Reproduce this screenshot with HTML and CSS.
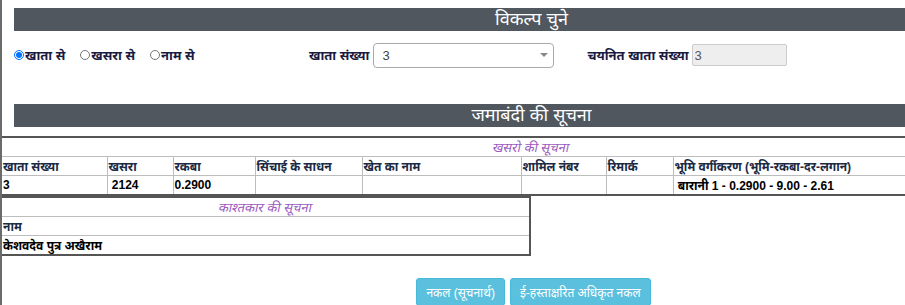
FILE: index.html
```
<!DOCTYPE html>
<html lang="hi">
<head>
<meta charset="utf-8">
<title>जमाबंदी</title>
<link rel="stylesheet" href="styles.css">
</head>
<body>
<div class="page">
  <div class="bar bar-top">विकल्प चुने</div>
  <div class="options">
    <div class="radios">
      <label class="radio"><input type="radio" name="opt" checked>खाता से</label>
      <label class="radio"><input type="radio" name="opt">खसरा से</label>
      <label class="radio"><input type="radio" name="opt">नाम से</label>
    </div>
    <label class="field-label">खाता संख्या</label>
    <span class="select-wrap"><select class="select"><option>3</option></select></span>
    <label class="field-label second">चयनित खाता संख्या</label>
    <input class="readonly" type="text" value="3" readonly>
  </div>
  <div class="bar bar-mid">जमाबंदी की सूचना</div>

  <table class="grid khasra">
    <colgroup>
      <col class="c1"><col class="c2"><col class="c3"><col class="c4"><col class="c5"><col class="c6"><col class="c7"><col>
    </colgroup>
    <tr><td class="title wide" colspan="8"><span class="slant">खसरो की सूचना</span></td></tr>
    <tr class="head">
      <td>खाता संख्या</td><td>खसरा</td><td>रकबा</td><td>सिंचाई के साधन</td><td>खेत का नाम</td><td>शामिल नंबर</td><td>रिमार्क</td><td>भूमि वर्गीकरण (भूमि-रकबा-दर-लगान)</td>
    </tr>
    <tr class="data">
      <td>3</td><td>&nbsp;2124</td><td>0.2900</td><td></td><td></td><td></td><td></td><td>&nbsp;बारानी 1 - 0.2900 - 9.00 - 2.61</td>
    </tr>
  </table>

  <table class="grid owner">
    <tr><td class="title"><span class="slant">काश्तकार की सूचना</span></td></tr>
    <tr class="head"><td>नाम</td></tr>
    <tr class="data"><td>केशवदेव पुत्र अखैराम</td></tr>
  </table>

  <div class="actions">
    <button class="btn" type="button">नकल (सूचनार्थ)</button>
    <button class="btn" type="button">ई-हस्ताक्षरित अधिकृत नकल</button>
  </div>
</div>
</body>
</html>
```
FILE: styles.css
```
html, body {
  margin: 0;
  padding: 0;
  background: #fff;
}
body {
  font-family: "Liberation Sans", "Noto Sans", Arial, sans-serif;
  color: #000;
}
.page {
  height: 305px;
  border-left: 2px solid #6b6b6b;
  overflow: hidden;
}
.bar {
  margin-left: 12px;
  height: 23px;
  line-height: 23px;
  background: #50575f;
  color: #fff;
  font-size: 18px;
  text-align: center;
  padding-left: 144px;
}
.bar-top {
  margin-top: 8px;
}
.options {
  display: flex;
  align-items: center;
  height: 24px;
  margin-top: 12px;
  padding-left: 12px;
}
.radios {
  display: flex;
  align-items: center;
  gap: 15px;
  width: 295px;
  font-size: 13px;
  font-weight: bold;
  color: #1a1a40;
}
.radio {
  display: flex;
  align-items: center;
}
.radio input {
  width: 10px;
  height: 10px;
  margin: 0 1px 0 0;
}
.field-label {
  font-size: 13px;
  font-weight: bold;
  color: #1a1a40;
  margin-right: 4px;
}
.field-label.second {
  margin-left: 33px;
  margin-right: 3px;
}
.select-wrap {
  position: relative;
  display: inline-block;
}
.select-wrap::after {
  content: "";
  position: absolute;
  right: 6px;
  top: 10px;
  border-left: 4px solid transparent;
  border-right: 4px solid transparent;
  border-top: 4px solid #888;
  pointer-events: none;
}
.select {
  appearance: none;
  -webkit-appearance: none;
  width: 181px;
  height: 25px;
  border: 1px solid #aaa;
  border-radius: 4px;
  background: #fff;
  font-family: "Liberation Sans", Arial, sans-serif;
  font-size: 13px;
  color: #444;
  padding: 0 8px;
  margin: 0;
}
.readonly {
  width: 95px;
  height: 22px;
  box-sizing: border-box;
  border: 1px solid #ccc;
  border-radius: 2px;
  background: #eee;
  color: #555;
  font-family: "Liberation Sans", Arial, sans-serif;
  font-size: 13px;
  padding: 0 2px;
  margin: 0;
}
.bar-mid {
  margin-top: 37px;
}
.grid {
  border-collapse: collapse;
  table-layout: fixed;
  font-size: 12px;
}
.grid td {
  padding: 0 0 0 1px;
  height: 18px;
  border: 1px solid #bdbdbd;
  white-space: nowrap;
  overflow: hidden;
  vertical-align: middle;
}
.khasra {
  width: 100%;
  margin-top: 9px;
  border-top: 2px solid #555;
  border-bottom: 2px solid #555;
}
.khasra td:last-child {
  border-right: none;
}
.khasra td:first-child, .owner td:first-child {
  border-left: none;
}
.c1 { width: 105px; }
.c2 { width: 66px; }
.c3 { width: 82px; }
.c4 { width: 107px; }
.c5 { width: 159px; }
.c6 { width: 85px; }
.c7 { width: 67px; }
.title {
  text-align: center;
  color: #9b59c0;
  font-size: 13px;
}
.slant {
  display: inline-block;
  transform: skewX(-12deg);
}
.title.wide {
  padding-left: 155px;
}
.head td {
  font-weight: bold;
  color: #1b2a44;
}
.data td {
  font-weight: bold;
  color: #000;
}
.owner {
  width: 529px;
  border-top: 2px solid #555;
  border-bottom: 2px solid #555;
  border-right: 2px solid #555;
}
.owner td {
  border-right: none;
}
.actions {
  display: flex;
  justify-content: center;
  gap: 5px;
  margin-top: 22px;
  padding-left: 160px;
}
.btn {
  background: #5bc0de;
  border: 1px solid #46b8da;
  border-radius: 3px;
  color: #fff;
  font-family: "Liberation Sans", "Noto Sans", sans-serif;
  font-size: 12px;
  height: 28px;
  padding: 0 9px;
}
```
